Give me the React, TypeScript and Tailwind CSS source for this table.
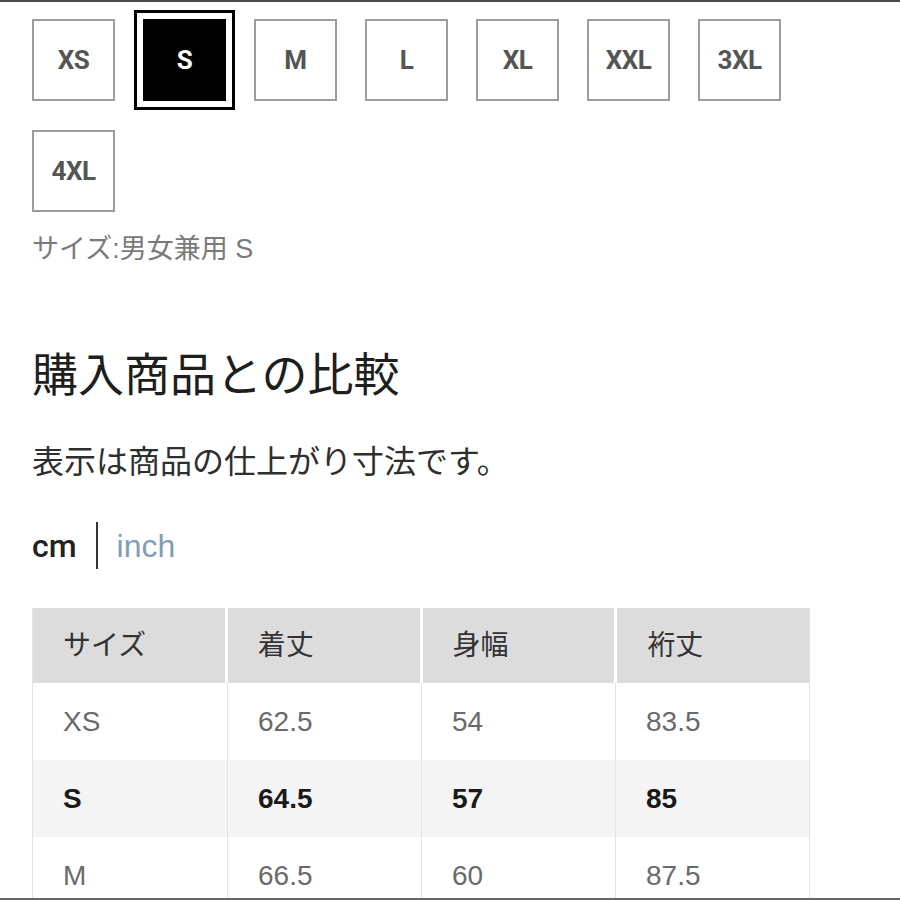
import React from 'react';

const sizes = ['XS', 'S', 'M', 'L', 'XL', 'XXL', '3XL', '4XL'];
const selected = 'S';

const rows = [
  { size: 'XS', length: '62.5', width: '54', sleeve: '83.5' },
  { size: 'S', length: '64.5', width: '57', sleeve: '85' },
  { size: 'M', length: '66.5', width: '60', sleeve: '87.5' },
];

const jp = "font-['Liberation_Sans','Noto_Sans_CJK_JP',sans-serif]";

const App = () => {
  return (
    <div className={`h-[900px] w-[900px] overflow-hidden border-t-2 border-b-2 border-t-[#4a4a4a] border-b-[#666] bg-white ${jp}`}>
      <div className="pl-[32px] pt-[17px]">
        <div className="flex w-[800px] flex-wrap gap-x-[28px] gap-y-[29px]">
          {sizes.map((s) => {
            const active = s === selected;
            return (
              <div
                key={s}
                className={
                  active
                    ? 'flex h-[82px] w-[83px] items-center justify-center bg-black outline-3 outline-offset-[6px] outline-black'
                    : 'flex h-[82px] w-[83px] items-center justify-center border-2 border-[#9c9c9c] bg-white'
                }
              >
                <span
                  className={`font-['Liberation_Sans_Narrow','Roboto',sans-serif] text-[26px] font-bold tracking-[-0.5px] ${
                    active ? 'text-white' : 'text-[#555]'
                  }`}
                >
                  {s}
                </span>
              </div>
            );
          })}
        </div>

        <p className="mt-[22px] text-[27px] leading-[30px] text-[#7a7a7a]">サイズ:男女兼用 S</p>

        <h2 className="mt-[84px] text-[46px] leading-[54px] font-normal text-[#1e1e1e]">購入商品との比較</h2>

        <p className="mt-[41px] text-[32px] leading-[38px] text-[#2e2e2e]">表示は商品の仕上がり寸法です。</p>

        <div className="mt-[41px] flex h-[47px] items-center text-[32px]">
          <span className="font-['Roboto',sans-serif] font-medium text-[#222]">cm</span>
          <span className="mx-[19px] h-[47px] w-[2px] bg-[#333]" />
          <span className="text-[#7f9db3]">inch</span>
        </div>

        <div className="mt-[39px] w-[778px] border-x border-[#e2e2e2]">
          <div className="grid h-[75px] grid-cols-4 gap-x-[3px] bg-white text-[28px] text-[#333]">
            {['サイズ', '着丈', '身幅', '裄丈'].map((h) => (
              <div key={h} className="flex items-center bg-[#dcdcdc] pl-[30px]">
                {h}
              </div>
            ))}
          </div>
          {rows.map((r) => {
            const active = r.size === selected;
            return (
              <div
                key={r.size}
                className={`grid h-[77px] grid-cols-4 text-[28px] ${
                  active ? 'bg-[#f4f4f4] font-bold text-[#1a1a1a]' : 'bg-white text-[#6a6a6a]'
                }`}
              >
                {[r.size, r.length, r.width, r.sleeve].map((v, i) => (
                  <div
                    key={i}
                    className={`flex items-center pl-[30px] ${i > 0 ? 'border-l border-[#e4e4e4]' : ''}`}
                  >
                    {v}
                  </div>
                ))}
              </div>
            );
          })}
        </div>
      </div>
    </div>
  );
};

export default App;
